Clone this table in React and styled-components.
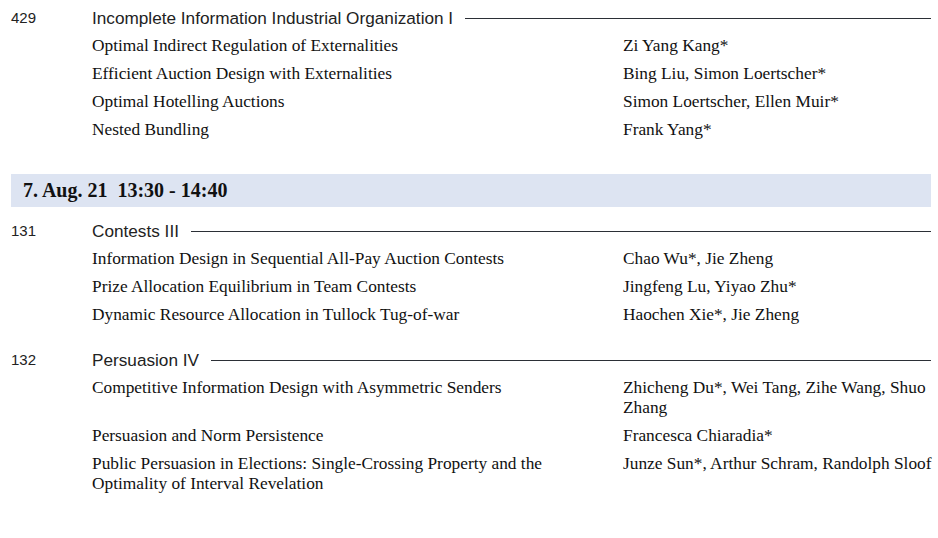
import React from "react";
import styled, { createGlobalStyle } from "styled-components";

const GlobalStyle = createGlobalStyle`
  body {
    margin: 0;
    background: #fff;
    color: #111;
  }
`;

const Page = styled.div`
  padding: 8px 2px 0 11px;
`;

const Session = styled.section`
  margin-bottom: ${(p) => p.$gap || 0}px;
`;

const SessionHead = styled.div`
  display: grid;
  grid-template-columns: 81px 1fr;
  align-items: center;
  font-family: "Liberation Sans", Arial, sans-serif;
  font-size: 17.2px;
  line-height: 20px;
  color: #222;
  margin-bottom: 8px;
  margin-right: 5px;
`;

const Num = styled.span`
  font-size: 15px;
`;

const TitleRow = styled.div`
  display: flex;
  align-items: center;
  gap: 12px;
`;

const Rule = styled.div`
  flex: 1;
  height: 1px;
  background: #2b2f36;
`;

const Papers = styled.div`
  margin-left: 81px;
  display: flex;
  flex-direction: column;
  gap: 8px;
`;

const Paper = styled.div`
  display: grid;
  grid-template-columns: 500px 1fr;
  column-gap: 31px;
  font-family: "Liberation Serif", "Times New Roman", serif;
  font-size: 17.33px;
  line-height: 20px;
  color: #111;
`;

const Band = styled.div`
  background: #dde4f2;
  height: 33px;
  display: flex;
  align-items: center;
  padding-left: 12px;
  margin: 34px 5px 14px 0;
  font-family: "Liberation Serif", "Times New Roman", serif;
  font-weight: bold;
  font-size: 20px;
  color: #111;
  white-space: pre;
`;

const sessions = [
  {
    num: "429",
    title: "Incomplete Information Industrial Organization I",
    papers: [
      ["Optimal Indirect Regulation of Externalities", "Zi Yang Kang*"],
      ["Efficient Auction Design with Externalities", "Bing Liu, Simon Loertscher*"],
      ["Optimal Hotelling Auctions", "Simon Loertscher, Ellen Muir*"],
      ["Nested Bundling", "Frank Yang*"],
    ],
  },
  {
    band: "7. Aug. 21  13:30 - 14:40",
  },
  {
    num: "131",
    title: "Contests III",
    papers: [
      ["Information Design in Sequential All-Pay Auction Contests", "Chao Wu*, Jie Zheng"],
      ["Prize Allocation Equilibrium in Team Contests", "Jingfeng Lu, Yiyao Zhu*"],
      ["Dynamic Resource Allocation in Tullock Tug-of-war", "Haochen Xie*, Jie Zheng"],
    ],
    gap: 25,
  },
  {
    num: "132",
    title: "Persuasion IV",
    papers: [
      [
        "Competitive Information Design with Asymmetric Senders",
        "Zhicheng Du*, Wei Tang, Zihe Wang, Shuo Zhang",
      ],
      ["Persuasion and Norm Persistence", "Francesca Chiaradia*"],
      [
        "Public Persuasion in Elections: Single-Crossing Property and the Optimality of Interval Revelation",
        "Junze Sun*, Arthur Schram, Randolph Sloof",
      ],
    ],
  },
];

export default function App() {
  return (
    <Page>
      <GlobalStyle />
      {sessions.map((s, i) =>
        s.band ? (
          <Band key={i}>{s.band}</Band>
        ) : (
          <Session key={i} $gap={s.gap}>
            <SessionHead>
              <Num>{s.num}</Num>
              <TitleRow>
                <span>{s.title}</span>
                <Rule />
              </TitleRow>
            </SessionHead>
            <Papers>
              {s.papers.map(([title, authors]) => (
                <Paper key={title}>
                  <span>{title}</span>
                  <span>{authors}</span>
                </Paper>
              ))}
            </Papers>
          </Session>
        )
      )}
    </Page>
  );
}
